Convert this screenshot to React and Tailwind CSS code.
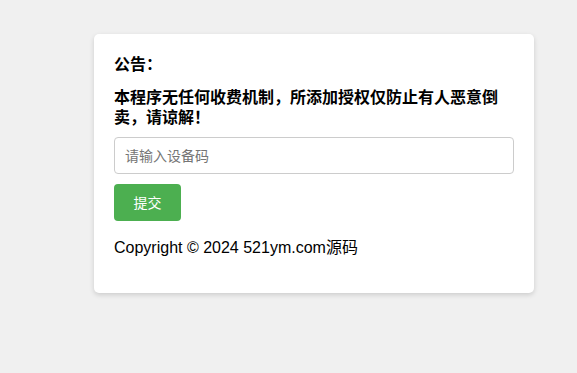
import React, { useState } from 'react';

const App = () => {
    const [code, setCode] = useState('');

    return (
        <div
            className="min-h-screen bg-[#f0f0f0] pt-[34px] pl-[94px]"
            style={{ fontFamily: '"Liberation Sans", "Noto Sans CJK SC", sans-serif' }}
        >
            <div className="w-[440px] bg-white rounded-[5px] p-5 shadow-[0_2px_5px_rgba(0,0,0,0.15)]">
                <h3 className="text-base font-bold leading-5 mt-[1px] text-black">公告：</h3>
                <p className="text-base font-bold leading-5 mt-[13px] text-black">
                    本程序无任何收费机制，所添加授权仅防止有人恶意倒卖，请谅解！
                </p>
                <input
                    type="text"
                    value={code}
                    onChange={(e) => setCode(e.target.value)}
                    placeholder="请输入设备码"
                    className="block w-full h-[37px] mt-[9px] px-[10px] border border-[#ccc] rounded-[4px] text-sm placeholder-[#757575] outline-none"
                />
                <button className="block mt-[10px] h-[37px] w-[67px] bg-[#4caf50] text-white text-sm rounded-[4px]">
                    提交
                </button>
                <p className="mt-[18px] mb-4 text-base leading-[18px] text-black">Copyright © 2024 521ym.com源码</p>
            </div>
        </div>
    );
};

export default App;
